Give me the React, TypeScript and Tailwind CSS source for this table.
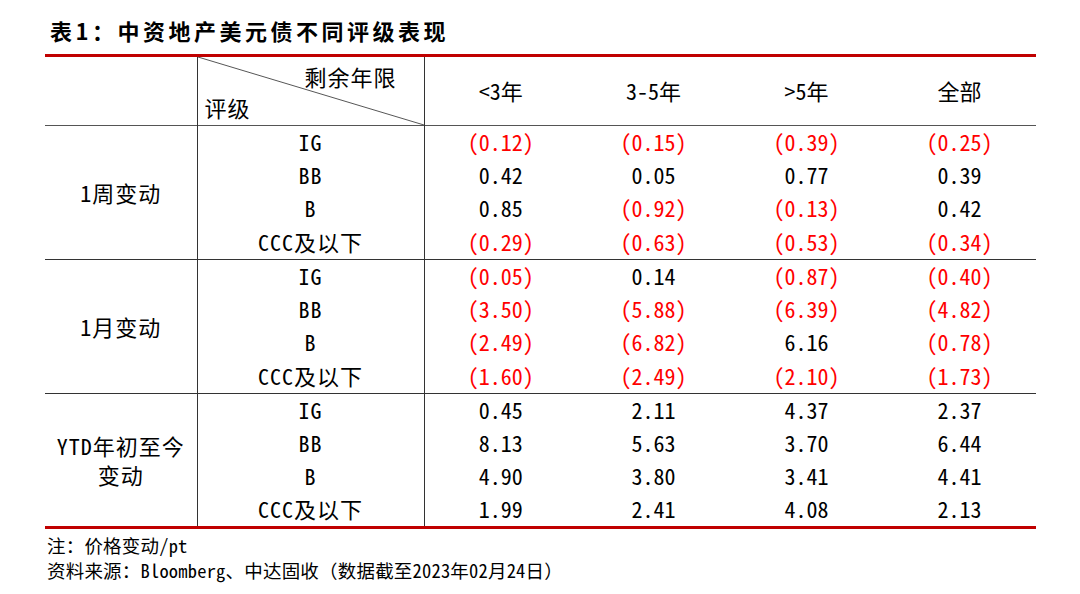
import React from 'react'

type Group = { label: string[]; rows: string[][] }

const groups: Group[] = [
  {
    label: ['1周变动'],
    rows: [
      ['IG', '(0.12)', '(0.15)', '(0.39)', '(0.25)'],
      ['BB', '0.42', '0.05', '0.77', '0.39'],
      ['B', '0.85', '(0.92)', '(0.13)', '0.42'],
      ['CCC及以下', '(0.29)', '(0.63)', '(0.53)', '(0.34)'],
    ],
  },
  {
    label: ['1月变动'],
    rows: [
      ['IG', '(0.05)', '0.14', '(0.87)', '(0.40)'],
      ['BB', '(3.50)', '(5.88)', '(6.39)', '(4.82)'],
      ['B', '(2.49)', '(6.82)', '6.16', '(0.78)'],
      ['CCC及以下', '(1.60)', '(2.49)', '(2.10)', '(1.73)'],
    ],
  },
  {
    label: ['YTD年初至今', '变动'],
    rows: [
      ['IG', '0.45', '2.11', '4.37', '2.37'],
      ['BB', '8.13', '5.63', '3.70', '6.44'],
      ['B', '4.90', '3.80', '3.41', '4.41'],
      ['CCC及以下', '1.99', '2.41', '4.08', '2.13'],
    ],
  },
]

const headers = ['<3年', '3-5年', '>5年', '全部']

const cellFont =
  "font-['Noto_Sans_Mono_CJK_SC','Noto_Sans_CJK_SC','DejaVu_Sans_Mono',monospace]"

export default function App() {
  return (
    <div className="w-[1080px] h-[594px] bg-white text-black overflow-hidden">
      <div className="pl-[45px] pt-[15px]">
        <h1 className="font-['Noto_Sans_CJK_SC',sans-serif] font-bold text-[22px] leading-[30px] tracking-[3.5px] pl-[5px]">
          表1：中资地产美元债不同评级表现
        </h1>

        <table
          className={`mt-[9px] w-[991px] table-fixed border-collapse border-t-[3px] border-b-[3px] border-[#c00000] ${cellFont} text-[22px]`}
        >
          <colgroup>
            <col className="w-[152px]" />
            <col className="w-[227px]" />
            <col className="w-[153px]" />
            <col className="w-[153px]" />
            <col className="w-[153px]" />
            <col className="w-[153px]" />
          </colgroup>
          <thead>
            <tr className="h-[68px] border-b border-[#555]">
              <th className="border-r border-[#333]" />
              <th className="relative border-r border-[#333] p-0 font-normal">
                <svg
                  className="absolute inset-0 w-full h-full"
                  viewBox="0 0 227 68"
                  preserveAspectRatio="none"
                >
                  <line x1="0" y1="0" x2="227" y2="68" stroke="#555" strokeWidth="1" />
                </svg>
                <div className="relative flex flex-col h-[68px]">
                  <div className="text-right pr-[27px] pt-[5px] leading-[28px] tracking-[1px]">
                    剩余年限
                  </div>
                  <div className="text-left pl-[7px] pt-[3px] leading-[28px] tracking-[1px]">
                    评级
                  </div>
                </div>
              </th>
              {headers.map((h) => (
                <th key={h} className="font-normal text-center pb-[2px]">
                  {h}
                </th>
              ))}
            </tr>
          </thead>
          <tbody>
            {groups.map((g, gi) =>
              g.rows.map((r, ri) => (
                <tr
                  key={`${gi}-${ri}`}
                  className={`h-[33.5px] ${ri === 0 && gi > 0 ? 'border-t border-[#333]' : ''}`}
                >
                  {ri === 0 && (
                    <td
                      rowSpan={4}
                      className="border-r border-[#333] text-center leading-[29px] tracking-[1px]"
                    >
                      {g.label.map((l) => (
                        <div key={l}>{l}</div>
                      ))}
                    </td>
                  )}
                  <td className="border-r border-[#333] text-center leading-none tracking-[1px] pb-[4px]">
                    {r[0]}
                  </td>
                  {r.slice(1).map((v, vi) => (
                    <td
                      key={vi}
                      className={`text-center leading-none pb-[4px] ${
                        v.startsWith('(') ? 'text-[#ff0000]' : 'text-black'
                      }`}
                    >
                      {v}
                    </td>
                  ))}
                </tr>
              )),
            )}
          </tbody>
        </table>

        <div className="mt-[4px] pl-[2px] font-['Noto_Sans_Mono_CJK_SC','Noto_Sans_CJK_SC',monospace] text-[18.5px] leading-[25px] tracking-[0.2px]">
          <p>注：价格变动/pt</p>
          <p>资料来源：Bloomberg、中达固收（数据截至2023年02月24日）</p>
        </div>
      </div>
    </div>
  )
}
